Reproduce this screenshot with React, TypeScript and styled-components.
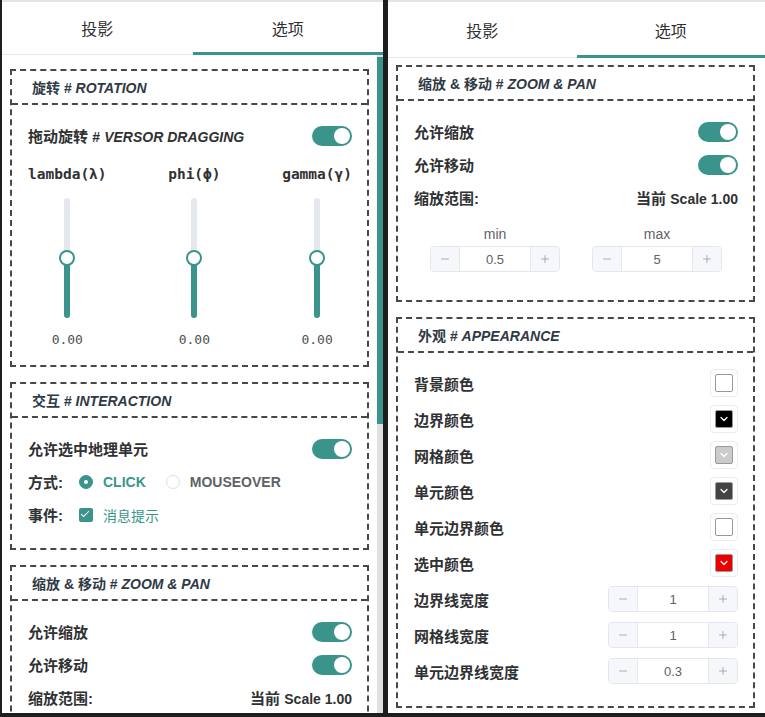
import React from 'react';
import styled, { createGlobalStyle, css } from 'styled-components';
import { ChevronDown, Minus, Plus } from 'lucide-react';

const TEAL = '#3a948b';
const DASH = '#484848';

const GlobalStyle = createGlobalStyle`
  html, body {
    margin: 0;
    padding: 0;
    background: #1e1e1e;
  }
  body {
    font-family: "Liberation Sans", "Noto Sans CJK SC", sans-serif;
    color: #303133;
  }
`;

type RotationAxis = { label: string; value: number; min: number; max: number };
type ColorItem = { label: string; color: string };
type WidthItem = { label: string; value: string };

const axes: RotationAxis[] = [
  { label: 'lambda(λ)', value: 0, min: -180, max: 180 },
  { label: 'phi(ϕ)', value: 0, min: -90, max: 90 },
  { label: 'gamma(γ)', value: 0, min: -180, max: 180 },
];

const colors: ColorItem[] = [
  { label: '背景颜色', color: '#ffffff' },
  { label: '边界颜色', color: '#000000' },
  { label: '网格颜色', color: '#cccccc' },
  { label: '单元颜色', color: '#444444' },
  { label: '单元边界颜色', color: '#ffffff' },
  { label: '选中颜色', color: '#ee0000' },
];

const widths: WidthItem[] = [
  { label: '边界线宽度', value: '1' },
  { label: '网格线宽度', value: '1' },
  { label: '单元边界线宽度', value: '0.3' },
];

function Tabs({ height }: { height: number }) {
  return (
    <TabBar $height={height}>
      <Tab>投影</Tab>
      <Tab $active>选项</Tab>
    </TabBar>
  );
}

function NumberInput({ value }: { value: string }) {
  return (
    <NumberBox>
      <StepBtn $side="left">
        <Minus size={12} strokeWidth={1.5} />
      </StepBtn>
      <NumValue>{value}</NumValue>
      <StepBtn $side="right">
        <Plus size={12} strokeWidth={1.5} />
      </StepBtn>
    </NumberBox>
  );
}

function RotationCard() {
  return (
    <Card>
      <CardHeader>
        旋转 <Latin>#</Latin> <Em>ROTATION</Em>
      </CardHeader>
      <CardBody>
        <Row>
          <RowLabel>
            拖动旋转 <Latin>#</Latin> <Em>VERSOR DRAGGING</Em>
          </RowLabel>
          <Toggle />
        </Row>
        <SliderGroup>
          {axes.map((a) => {
            const pct = ((a.value - a.min) / (a.max - a.min)) * 100;
            return (
              <SliderCol key={a.label}>
                <AxisLabel>{a.label}</AxisLabel>
                <VTrack>
                  <VFill style={{ height: `${pct}%` }} />
                  <VThumb style={{ bottom: `${pct}%` }} />
                </VTrack>
                <AxisValue>{a.value.toFixed(2)}</AxisValue>
              </SliderCol>
            );
          })}
        </SliderGroup>
      </CardBody>
    </Card>
  );
}

function InteractionCard() {
  return (
    <Card>
      <CardHeader>
        交互 <Latin>#</Latin> <Em>INTERACTION</Em>
      </CardHeader>
      <CardBody>
        <Row>
          <RowLabel>允许选中地理单元</RowLabel>
          <Toggle />
        </Row>
        <Row $start>
          <FieldLabel>方式:</FieldLabel>
          <RadioOption $checked>
            <Radio $checked />
            CLICK
          </RadioOption>
          <RadioOption>
            <Radio />
            MOUSEOVER
          </RadioOption>
        </Row>
        <Row $start>
          <FieldLabel>事件:</FieldLabel>
          <CheckOption>
            <Checkbox />
            消息提示
          </CheckOption>
        </Row>
      </CardBody>
    </Card>
  );
}

function ZoomCard() {
  return (
    <Card>
      <CardHeader>
        缩放 <Latin>&amp;</Latin> 移动 <Latin>#</Latin> <Em>ZOOM &amp; PAN</Em>
      </CardHeader>
      <CardBody $bottom={16}>
        <Row>
          <RowLabel>允许缩放</RowLabel>
          <Toggle />
        </Row>
        <Row>
          <RowLabel>允许移动</RowLabel>
          <Toggle />
        </Row>
        <Row>
          <RowLabel>缩放范围:</RowLabel>
          <RowLabel>
            当前 <Latin>Scale 1.00</Latin>
          </RowLabel>
        </Row>
        <RangeGrid>
          <RangeCol>
            <RangeLabel>min</RangeLabel>
            <NumberInput value="0.5" />
          </RangeCol>
          <RangeCol>
            <RangeLabel>max</RangeLabel>
            <NumberInput value="5" />
          </RangeCol>
        </RangeGrid>
      </CardBody>
    </Card>
  );
}

function AppearanceCard() {
  return (
    <Card>
      <CardHeader>
        外观 <Latin>#</Latin> <Em>APPEARANCE</Em>
      </CardHeader>
      <CardBody $top={12} $bottom={17}>
        {colors.map((c) => (
          <Row key={c.label} $tall>
            <RowLabel>{c.label}</RowLabel>
            <ColorTrigger>
              <ColorSwatch $color={c.color}>
                {c.color !== '#ffffff' && <ChevronDown size={12} strokeWidth={2.5} />}
              </ColorSwatch>
            </ColorTrigger>
          </Row>
        ))}
        {widths.map((w) => (
          <Row key={w.label} $tall>
            <RowLabel>{w.label}</RowLabel>
            <NumberInput value={w.value} />
          </Row>
        ))}
      </CardBody>
    </Card>
  );
}

export default function App() {
  // visible share of the left panel's scrolled content
  const thumbRatio = 0.56;
  return (
    <>
      <GlobalStyle />
      <Screen>
        <Panel $width={381}>
          <Tabs height={52} />
          <PanelBody>
            <Content $top={14} $right={8}>
              <RotationCard />
              <InteractionCard />
              <ZoomCard />
              <AppearanceCard />
            </Content>
            <ScrollRail>
              <ScrollThumb style={{ height: `${thumbRatio * 100}%` }} />
            </ScrollRail>
          </PanelBody>
        </Panel>
        <Panel $width={377}>
          <Tabs height={55} />
          <PanelBody>
            <Content $top={7} $right={10}>
              <ZoomCard />
              <AppearanceCard />
            </Content>
          </PanelBody>
        </Panel>
      </Screen>
    </>
  );
}

const Screen = styled.div`
  display: flex;
  gap: 5px;
  height: 717px;
  padding-left: 2px;
  box-sizing: border-box;
  overflow: hidden;
`;

const Panel = styled.div<{ $width: number }>`
  width: ${(p) => p.$width}px;
  height: 713px;
  flex-shrink: 0;
  display: flex;
  flex-direction: column;
  background: #fff;
  border-top: 2px solid #e4e4e4;
  box-sizing: border-box;
  overflow: hidden;
`;

const TabBar = styled.div<{ $height: number }>`
  display: flex;
  height: ${(p) => p.$height}px;
  flex-shrink: 0;
  border-bottom: 1px solid #e4e7ed;
`;

const Tab = styled.div<{ $active?: boolean }>`
  flex: 1;
  position: relative;
  display: flex;
  align-items: center;
  justify-content: center;
  font-size: 16px;
  color: #303133;
  ${(p) =>
    p.$active &&
    css`
      &::after {
        content: '';
        position: absolute;
        left: 0;
        right: 0;
        bottom: -1px;
        height: 3px;
        background: ${TEAL};
      }
    `}
`;

const PanelBody = styled.div`
  flex: 1;
  min-height: 0;
  display: flex;
`;

const Content = styled.div<{ $top: number; $right: number }>`
  flex: 1;
  min-width: 0;
  overflow: hidden;
  padding: ${(p) => p.$top}px ${(p) => p.$right}px 20px 8px;
`;

const ScrollRail = styled.div`
  width: 6px;
  flex-shrink: 0;
  padding-top: 2px;
  background: #e0e0e0;
`;

const ScrollThumb = styled.div`
  width: 100%;
  background: ${TEAL};
`;

const Card = styled.section`
  border: 2px dashed ${DASH};
  & + & {
    margin-top: 15px;
  }
`;

const CardHeader = styled.div`
  height: 29px;
  padding: 3px 20px 0;
  line-height: 29px;
  white-space: pre;
  border-bottom: 2px dashed ${DASH};
  font-size: 14px;
  font-weight: bold;
  color: #2f3a45;
`;

const Latin = styled.span`
  font-size: 14px;
`;

const Em = styled.em`
  font-size: 14px;
  font-style: italic;
`;

const CardBody = styled.div<{ $top?: number; $bottom?: number }>`
  padding: ${(p) => p.$top ?? 14}px 15px ${(p) => p.$bottom ?? 17}px 16px;
`;

const Row = styled.div<{ $start?: boolean; $tall?: boolean }>`
  display: flex;
  align-items: center;
  justify-content: ${(p) => (p.$start ? 'flex-start' : 'space-between')};
  height: ${(p) => (p.$tall ? 36 : 33)}px;
`;

const RowLabel = styled.span`
  font-size: 15px;
  font-weight: bold;
  color: #303133;
  white-space: pre;
`;

const FieldLabel = styled.span`
  width: 51px;
  font-size: 15px;
  font-weight: bold;
  color: #303133;
`;

const Toggle = styled.span`
  position: relative;
  width: 40px;
  height: 20px;
  border-radius: 10px;
  background: ${TEAL};
  &::after {
    content: '';
    position: absolute;
    top: 2px;
    right: 2px;
    width: 16px;
    height: 16px;
    border-radius: 50%;
    background: #fff;
  }
`;

const SliderGroup = styled.div`
  display: flex;
  justify-content: space-between;
  margin-top: 12px;
`;

const SliderCol = styled.div`
  display: flex;
  flex-direction: column;
  align-items: center;
`;

const AxisLabel = styled.div`
  font-family: "DejaVu Sans Mono", monospace;
  font-weight: bold;
  font-size: 14.5px;
  line-height: 20px;
  color: #303133;
`;

const VTrack = styled.div`
  position: relative;
  width: 6px;
  height: 120px;
  margin: 14px 0;
  border-radius: 3px;
  background: #e4e7ed;
`;

const VFill = styled.div`
  position: absolute;
  left: 0;
  right: 0;
  bottom: 0;
  border-radius: 3px;
  background: ${TEAL};
`;

const VThumb = styled.div`
  position: absolute;
  left: 50%;
  width: 16px;
  height: 16px;
  box-sizing: border-box;
  border: 2px solid ${TEAL};
  border-radius: 50%;
  background: #fff;
  transform: translate(-50%, 50%);
`;

const AxisValue = styled.div`
  font-family: "DejaVu Sans Mono", monospace;
  font-size: 13px;
  line-height: 16px;
  color: #505050;
`;

const RadioOption = styled.span<{ $checked?: boolean }>`
  display: flex;
  align-items: center;
  gap: 10px;
  margin-right: 20px;
  font-size: 14px;
  font-weight: bold;
  color: ${(p) => (p.$checked ? TEAL : '#606266')};
`;

const Radio = styled.span<{ $checked?: boolean }>`
  position: relative;
  width: 14px;
  height: 14px;
  box-sizing: border-box;
  border-radius: 50%;
  border: 1px solid ${(p) => (p.$checked ? TEAL : '#dcdfe6')};
  background: ${(p) => (p.$checked ? TEAL : '#fff')};
  ${(p) =>
    p.$checked &&
    css`
      &::after {
        content: '';
        position: absolute;
        left: 50%;
        top: 50%;
        width: 4px;
        height: 4px;
        border-radius: 50%;
        background: #fff;
        transform: translate(-50%, -50%);
      }
    `}
`;

const CheckOption = styled.span`
  display: flex;
  align-items: center;
  gap: 10px;
  font-size: 14px;
  color: ${TEAL};
`;

const Checkbox = styled.span`
  position: relative;
  width: 14px;
  height: 14px;
  border-radius: 2px;
  background: ${TEAL};
  &::after {
    content: '';
    position: absolute;
    left: 4px;
    top: 1px;
    width: 3px;
    height: 7px;
    border: solid #fff;
    border-width: 0 1px 1px 0;
    transform: rotate(45deg);
  }
`;

const RangeGrid = styled.div`
  display: grid;
  grid-template-columns: 1fr 1fr;
  margin-top: 10px;
  padding-bottom: 12px;
`;

const RangeCol = styled.div`
  display: flex;
  flex-direction: column;
  align-items: center;
  gap: 2px;
`;

const RangeLabel = styled.div`
  font-size: 14px;
  line-height: 20px;
  color: #606266;
`;

const NumberBox = styled.div`
  display: flex;
  width: 130px;
  height: 26px;
  box-sizing: border-box;
  border: 1px solid #e4e7ed;
  border-radius: 4px;
  overflow: hidden;
  background: #fff;
`;

const StepBtn = styled.span<{ $side: 'left' | 'right' }>`
  width: 28px;
  display: flex;
  align-items: center;
  justify-content: center;
  background: #f5f7fa;
  color: #909399;
  border-${(p) => (p.$side === 'left' ? 'right' : 'left')}: 1px solid #e4e7ed;
`;

const NumValue = styled.span`
  flex: 1;
  display: flex;
  align-items: center;
  justify-content: center;
  font-size: 13px;
  color: #606266;
`;

const ColorTrigger = styled.span`
  display: flex;
  width: 28px;
  height: 28px;
  box-sizing: border-box;
  padding: 4px;
  border: 1px solid #ececec;
  border-radius: 4px;
`;

const ColorSwatch = styled.span<{ $color: string }>`
  flex: 1;
  display: flex;
  align-items: center;
  justify-content: center;
  border: 1px solid #999;
  border-radius: 2px;
  background: ${(p) => p.$color};
  color: #fff;
`;
